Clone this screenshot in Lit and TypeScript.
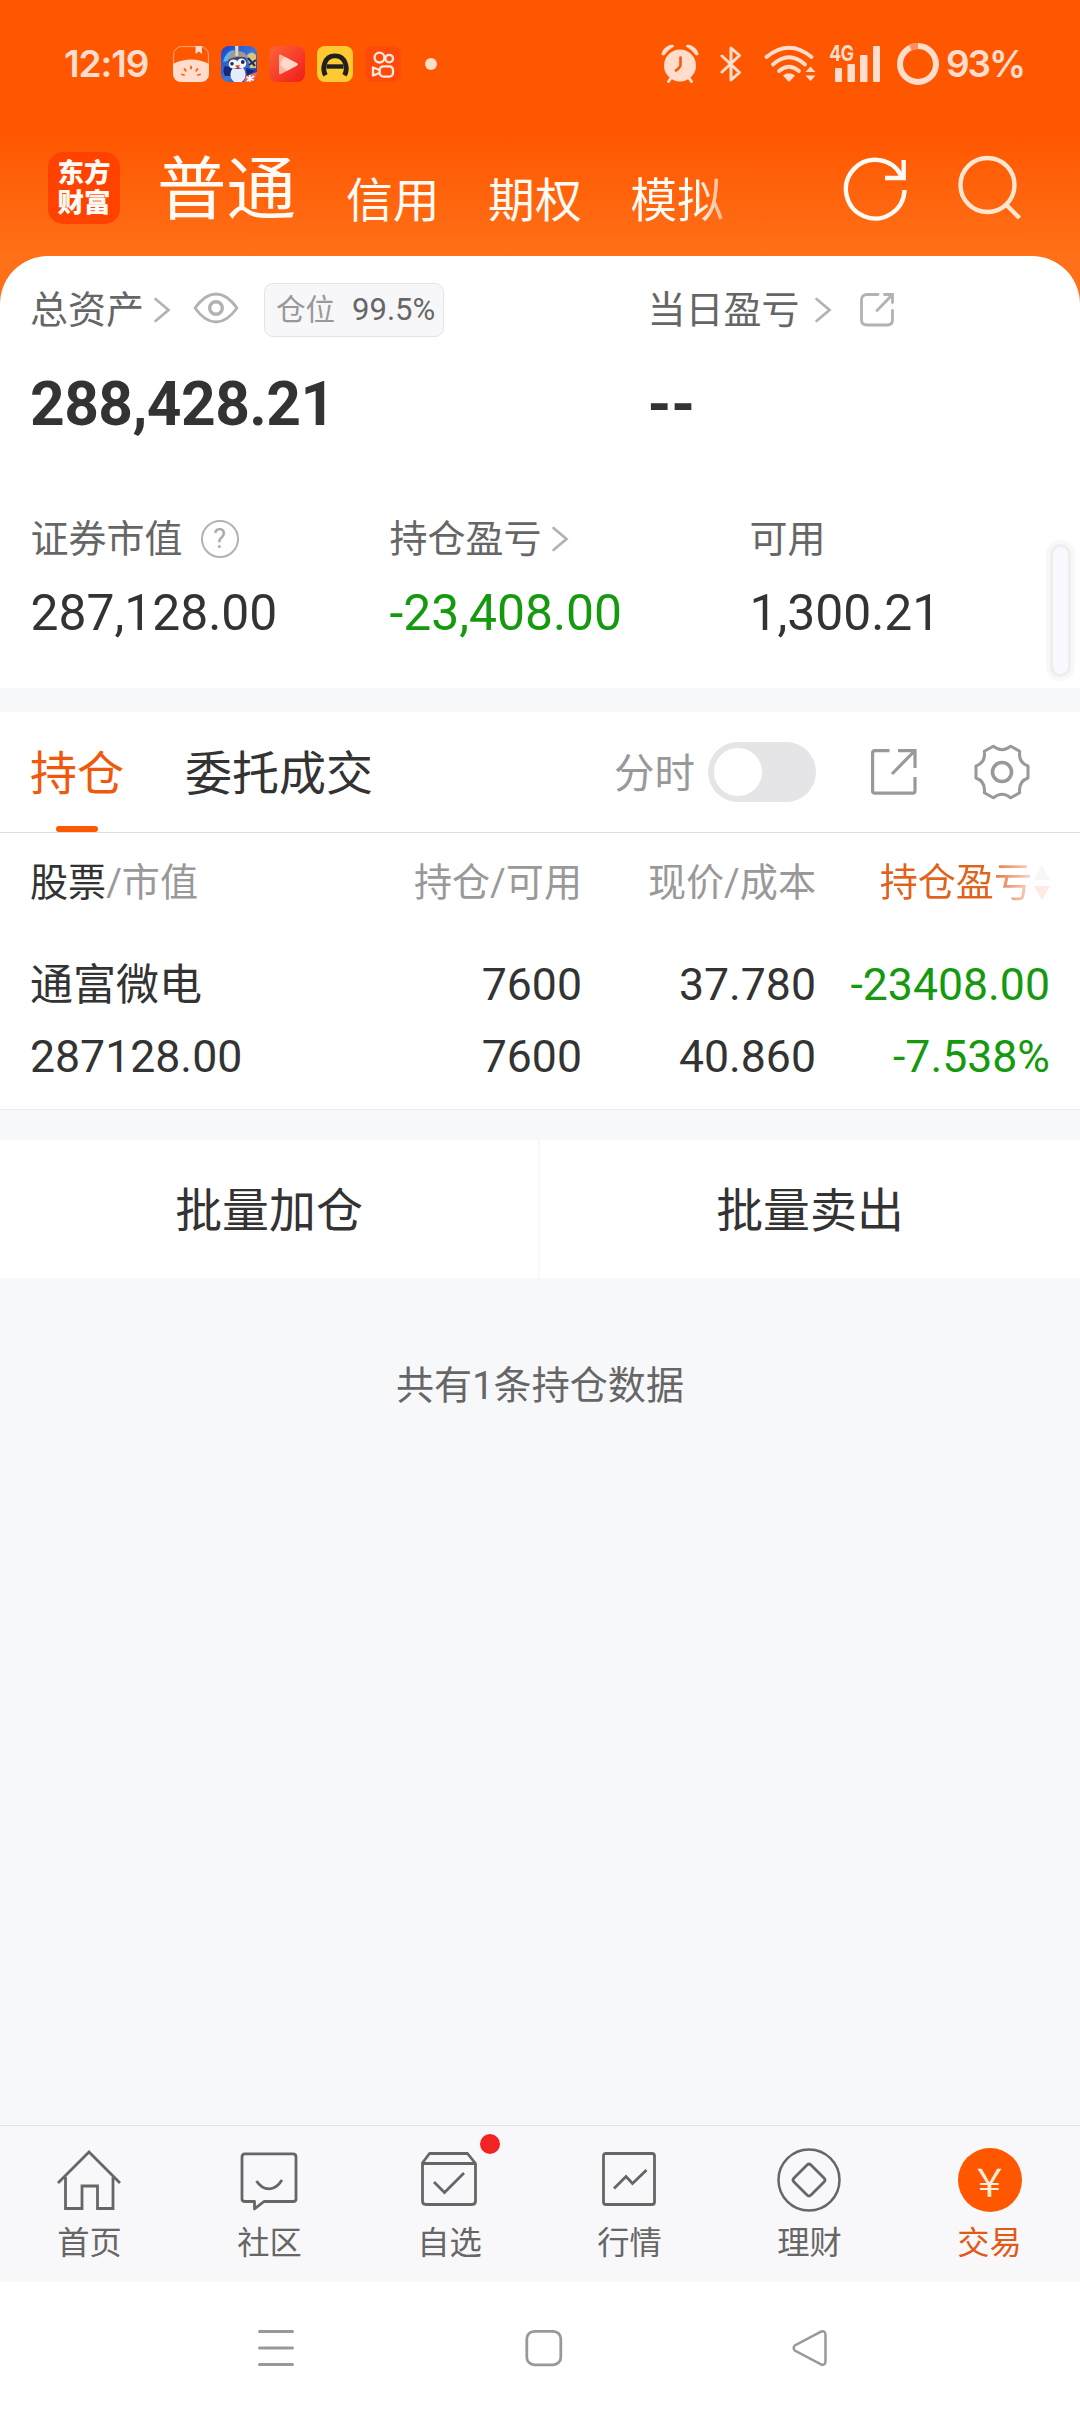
import { LitElement, html, css, svg } from "lit";
import { customElement, property } from "lit/decorators.js";

const chevron = html`<svg class="chev" width="18" height="28" viewBox="0 0 18 28" fill="none" stroke="#b2b2b2" stroke-width="2.7" stroke-linecap="round"><path d="M2.5 3 L15.5 14 L2.5 25" /></svg>`;

@customElement("status-bar")
export class StatusBar extends LitElement {
  static styles = css`
    :host { display: flex; height: 128px; align-items: center; padding: 0 56px 0 64px; box-sizing: border-box; font-family: "Inter", "Roboto", sans-serif; color: #ffdccb; }
    .time { width: 109px; font-size: 37px; line-height: 40px; font-weight: 600; letter-spacing: -1.1px; white-space: nowrap; }
    .apps { display: flex; gap: 12px; }
    .dot { width: 12px; height: 12px; border-radius: 50%; background: #ffdccb; margin-left: 24px; }
    .right { margin-left: auto; display: flex; align-items: center; }
    svg { display: block; }
    .signal { width: 52px; height: 40px; margin-left: 13px; position: relative; }
    .gen { position: absolute; left: 0; top: -1px; font-size: 22px; line-height: 20px; font-weight: 700; letter-spacing: -1px; transform: scaleX(.82); transform-origin: left; }
    .bars { position: absolute; left: 6px; top: 2px; }
    .bt { margin-left: 21px; }
    .wifi { margin-left: 22px; }
    .ring { margin-left: 16px; }
    .pct { margin-left: 7px; font-size: 37px; line-height: 44px; font-weight: 600; letter-spacing: -2.1px; width: 78px; white-space: nowrap; }
  `;
  render() {
    return html`
      <div class="time">12:19</div>
      <div class="apps">
        <svg width="36" height="36" viewBox="0 0 36 36">
          <rect x=".6" y=".6" width="34.8" height="34.8" rx="8" fill="none" stroke="#ffa87c" stroke-width="1" />
          <path d="M0 18 Q8 13.5 18 13.5 T36 18 V27 Q36 36 27 36 H9 Q0 36 0 27 Z" fill="#ffdccb" />
          <path d="M22.5 0 H29 V8 L25.8 5.5 L22.5 8 Z" fill="#ffdccb" />
          <g stroke="#ff5a06" stroke-width="1.8" stroke-linecap="round"><path d="M18 20.5 V22.5 M11.5 23 L12.8 24.8 M24.5 23 L23.2 24.8 M9 28.5 L11 29 M27 28.5 L25 29" /></g>
        </svg>
        <svg width="36" height="36" viewBox="0 0 36 36">
          <defs><clipPath id="pc"><rect width="36" height="36" rx="8" /></clipPath><linearGradient id="pg" x1="0" y1="0" x2="1" y2="1"><stop offset="0" stop-color="#1b45c5" /><stop offset=".55" stop-color="#3e78dc" /><stop offset="1" stop-color="#172a8e" /></linearGradient></defs>
          <g clip-path="url(#pc)">
            <rect width="36" height="36" fill="url(#pg)" />
            <path d="M2 16 Q5 4 14 4 L10 14 Z" fill="#55b8f1" />
            <path d="M26 9 Q31 4 35 9 V22 L29 22 Z" fill="#d8c67a" />
            <path d="M28 19 L35 14 M27 12 L34 20" stroke="#1f2c6a" stroke-width="2" />
            <path d="M4 20 Q1 24 4 30 L11 30 L12 22 Z M25 22 L34 25 L26 30 Z" fill="#142a78" />
            <ellipse cx="17" cy="28.5" rx="7.6" ry="8.5" fill="#e6ecfa" />
            <ellipse cx="16.500" cy="16" rx="9.500" ry="7" fill="#3a4678" />
            <ellipse cx="12.500" cy="18" rx="4.800" ry="4.600" fill="#f2f4fb" /><ellipse cx="20.500" cy="17.400" rx="4.800" ry="4.800" fill="#f2f4fb" />
            <circle cx="11" cy="17.800" r="1.800" fill="#222a4d" /><circle cx="21.800" cy="16" r="1.900" fill="#222a4d" />
            <path d="M6.500 14 Q8 5 15.500 5.500 Q24 4 26.500 12 Q16 8.500 6.500 14 Z" fill="#a59a8c" />
            <path d="M14 0 H17.5 L17 10 L14.500 10 Z" fill="#e5d9b5" />
            <path d="M14 19.5 L19 19 L16.8 22.6 Z" fill="#f0452c" />
            <path d="M25 30 L36 26 V36 H23 Z" fill="#f06a5a" /><path d="M29 29 V36 M25.5 31 L33 34.5 M33 30 L26 35" stroke="#fff" stroke-width="1.6" />
          </g>
        </svg>
        <svg width="36" height="36" viewBox="0 0 36 36">
          <defs><linearGradient id="vg" x1="0" y1="0" x2="1" y2="1"><stop offset="0" stop-color="#ff6436" /><stop offset="1" stop-color="#ee1c1c" /></linearGradient></defs>
          <rect width="36" height="36" rx="8" fill="url(#vg)" />
          <path d="M12 8.8 Q10 7.8 10 10 V27 Q10 29 12 28 L28 19.4 Q29.6 18.3 28 17.2 Z" fill="#ffb3a5" />
          <path d="M16 11 L28 17.2 Q29.6 18.3 28 19.4 L18 24.8 L10.4 18.5 Z" fill="#ffd6cc" />
        </svg>
        <svg width="36" height="36" viewBox="0 0 36 36">
          <rect width="36" height="36" rx="8" fill="#fdca34" />
          <path d="M8.600 29.300 C5 23.5 6.5 9.8 18 9.8 C29.5 9.8 31 23.5 27.400 29.300" fill="none" stroke="#20211f" stroke-width="4.800" />
          <path d="M9.5 20.5 H26.5" stroke="#20211f" stroke-width="4.4" />
        </svg>
        <svg width="36" height="36" viewBox="0 0 36 36" fill="none" stroke="#ffebe2" stroke-width="2.3">
          <rect width="36" height="36" rx="8" fill="#ff4a0a" stroke="none" />
          <circle cx="14.5" cy="11.6" r="4.9" /><circle cx="24.2" cy="12.6" r="3.8" />
          <rect x="14.7" y="20.3" width="13.3" height="10.3" rx="3.8" />
          <path d="M14.5 24 L8 21.5 V29.5 L14.5 27" stroke-linejoin="round" />
        </svg>
      </div>
      <div class="dot"></div>
      <div class="right">
        <svg width="38" height="40" viewBox="0 0 38 40">
          <path d="M.8 10.5 Q2.5 2.5 11 1 L13 2 Q6.5 5.5 3 11 Z M37.2 10.5 Q35.5 2.5 27 1 L25 2 Q31.5 5.5 35 11 Z" fill="#ffdccb" stroke="#ffdccb" stroke-linejoin="round" />
          <circle cx="19" cy="21.5" r="16" fill="#ffdccb" />
          <path d="M10 34 L7.5 37.5 M28 34 L30.5 37.5" stroke="#ffdccb" stroke-width="3" stroke-linecap="round" />
          <path d="M19.5 13.5 V21 Q19.5 23 15 26.5" fill="none" stroke="#ff5700" stroke-width="2.6" stroke-linecap="round" />
        </svg>
        <svg class="bt" width="22" height="38" viewBox="0 0 22 38" fill="none" stroke="#ffdccb" stroke-width="3" stroke-linejoin="round" stroke-linecap="round"><path d="M2 11 L19.5 27.5 L11 35 V3 L19.5 10.5 L2 27" /></svg>
        <svg class="wifi" width="52" height="38" viewBox="0 0 52 38">
          <g fill="none" stroke="#ffdccb" stroke-width="3.8" stroke-linecap="round"><path d="M2.5 12 Q25 -6.5 47.5 12" /><path d="M9 19.5 Q25 5 41 19.5" /><path d="M15 26 Q25 17.5 35 26" /></g>
          <path d="M19 30.5 Q25 26 31 30.5 L26 36 Q25 37 24 36 Z" fill="#ffdccb" />
          <path d="M41.5 27 L46.5 21.5 L51.5 27 Z M41.5 30.5 L46.5 36 L51.5 30.5 Z" fill="#ffdccb" />
        </svg>
        <div class="signal"><span class="gen">4G</span>
          <svg class="bars" width="46" height="36" fill="#ffdccb"><rect y="22" width="7" height="14" rx="1" /><rect x="12.5" y="18" width="7.5" height="18" rx="1" /><rect x="25" y="9" width="7.5" height="27" rx="1" /><rect x="38" width="7" height="36" rx="1" /></svg>
        </div>
        <svg class="ring" width="42" height="42" viewBox="0 0 42 42" fill="none"><circle cx="21" cy="21" r="18" stroke="#ffdccb" stroke-width="6" /><path d="M21 3 A18 18 0 0 0 13.3 4.7" stroke="#ff8f5c" stroke-width="6.5" /></svg>
        <div class="pct">93%</div>
      </div>`;
  }
}

@customElement("account-header")
export class AccountHeader extends LitElement {
  static styles = css`
    :host { display: flex; height: 128px; padding: 0 56px 0 48px; box-sizing: border-box; color: #fffaf3; }
    .logo { width: 72px; height: 72px; margin-top: 24px; border-radius: 15px; background: #ff4200; display: flex; align-items: center; justify-content: center; font-weight: 900; font-size: 26.5px; line-height: 30px; }
    .tabs { display: flex; margin-left: 37px; white-space: nowrap; width: 700px; }
    .main { font-size: 69.5px; line-height: 80px; margin-top: 23px; }
    .tab { font-size: 46.8px; line-height: 60px; margin-top: 43px; }
    .t1 { margin-left: 50px; } .t2 { margin-left: 48.5px; }
    .fade { background: linear-gradient(90deg, #fffaf3 72%, #ffb184 100%); -webkit-background-clip: text; color: transparent; }
    .icons { display: flex; margin-left: -14px; }
    svg { display: block; }
    .refresh { margin-top: 28px; }
    .search { margin: 26px 0 0 47.5px; }
  `;
  render() {
    return html`
      <div class="logo"><div>东方<br />财富</div></div>
      <div class="tabs">
        <div class="main">普通</div>
        <div class="tab t1">信用</div><div class="tab t2">期权</div><div class="tab t2 fade">模拟</div>
      </div>
      <div class="icons">
        <svg class="refresh" width="66" height="66" viewBox="0 0 66 66" fill="none" stroke="#fffaf3" stroke-width="4.4"><path d="M61.5 34 A29.3 29.3 0 1 1 58.5 20.2" /><path d="M60.7 4 V22 H42" /></svg>
        <svg class="search" width="66" height="68" viewBox="0 0 66 68" fill="none" stroke="#ffe6d0" stroke-width="4.4"><circle cx="30.5" cy="31" r="27" /><path d="M49.5 51 L62.5 64" /></svg>
      </div>`;
  }
}

@customElement("asset-card")
export class AssetCard extends LitElement {
  static styles = css`
    :host { display: block; height: 432px; box-sizing: border-box; border-radius: 48px 48px 0 0; background: #fff; color: #333; position: relative; padding-top: 26px; }
    .top { display: grid; grid-template-columns: 617.5px 1fr; padding-left: 30px; }
    .line { display: flex; align-items: center; height: 56px; line-height: 54px; font-size: 38px; color: #666; white-space: nowrap; }
    svg { display: block; }
    .chev { margin-left: 9px; }
    .eye { margin-left: 22px; margin-top: -4px; }
    .badge { margin-left: 25px; width: 180px; height: 54px; line-height: 50px; box-sizing: border-box; border: 1.5px solid #e4e4e8; border-radius: 9px; background: #f7f7fa; display: flex; align-items: center; padding-left: 11px; color: #999; font-size: 29.5px; }
    .badge b { font-weight: 400; color: #666; margin-left: 17px; font-size: 31px; }
    .far { margin-left: 14.5px; }
    .share { margin-left: 26.5px; }
    .big { font-weight: 700; font-size: 60.5px; line-height: 72px; margin-top: 31px; white-space: nowrap; letter-spacing: -.55px; }
    .dash { letter-spacing: -.2px; }
    .grid { display: grid; grid-template-columns: 359px 360px 1fr; padding-left: 30.5px; margin-top: 70px; }
    .help { width: 38px; height: 38px; line-height: 34px; box-sizing: border-box; border: 2.5px solid #b2b2b2; border-radius: 50%; margin-left: 18px; display: flex; align-items: center; justify-content: center; font-size: 27px; color: #aaa; }
    .val { font-size: 49.8px; line-height: 60px; margin-top: 16px; white-space: nowrap; }
    .green { color: #15990f; }
    .handle { position: absolute; left: 1053px; top: 291px; width: 15px; height: 127px; border-radius: 8px; background: #f8f8fe; box-shadow: 0 0 0 3px #eeeeef, 0 0 1px 7px #f8f8f8; }
  `;
  render() {
    return html`
      <div class="top">
        <div>
          <div class="line">总资产${chevron}
            <svg class="eye" width="46" height="32" viewBox="0 0 46 32" fill="none" stroke="#b2b2b2" stroke-width="2.8"><path d="M2 16 Q12 2 23 2 T44 16 Q34 30 23 30 T2 16 Z" stroke-linejoin="round" /><circle cx="23" cy="16" r="6.3" stroke-width="3.4" /></svg>
            <div class="badge">仓位<b>99.5%</b></div>
          </div>
          <div class="big">288,428.21</div>
        </div>
        <div>
          <div class="line">当日盈亏<span class="far"></span>
            <svg width="18" height="28" viewBox="0 0 18 28" fill="none" stroke="#b2b2b2" stroke-width="2.7" stroke-linecap="round"><path d="M2.5 3 L15.5 14 L2.5 25" /></svg>
            <svg class="share" width="36" height="36" viewBox="0 0 36 36" fill="none" stroke="#b2b2b2" stroke-width="2.8" stroke-linecap="round"><path d="M19 2.5 H8 Q2.5 2.5 2.5 8 V28 Q2.5 33 8 33 H28 Q33.5 33 33.5 28 V18.5" /><path d="M25.5 2.5 H33.5 V10.5 M33 3 L18 18.5" /></svg>
          </div>
          <div class="big dash">--</div>
        </div>
      </div>
      <div class="grid">
        <div><div class="line">证券市值<span class="help">?</span></div><div class="val">287,128.00</div></div>
        <div><div class="line">持仓盈亏${chevron}</div><div class="val green">-23,408.00</div></div>
        <div><div class="line">可用</div><div class="val">1,300.21</div></div>
      </div>
      <div class="handle"></div>`;
  }
}

@customElement("holdings-panel")
export class HoldingsPanel extends LitElement {
  static styles = css`
    :host { display: block; color: #333; background: #fff; }
    .tabs { display: flex; height: 121px; box-sizing: border-box; border-bottom: 1.5px solid #dedede; padding-left: 30px; font-size: 47px; line-height: 60px; white-space: nowrap; }
    .tab { padding-top: 32px; margin-right: 61px; position: relative; }
    .on { color: #f0590d; }
    .on::after { content: ""; position: absolute; left: 26px; top: 114px; width: 42px; height: 6px; border-radius: 3px; background: #ff5700; }
    .tools { display: flex; align-items: center; height: 120px; margin-left: 180px; font-size: 40.5px; color: #999; }
    .tools span { padding-top: 4px; }
    .switch { width: 108px; height: 60px; border-radius: 30px; background: #e5e5e7; margin-left: 13px; display: flex; align-items: center; padding-left: 6px; box-sizing: border-box; }
    .knob { width: 48px; height: 48px; border-radius: 50%; background: #fff; }
    svg { display: block; }
    .share { margin-left: 54px; } .gear { margin-left: 56px; }
    .row { display: grid; grid-template-columns: 280px 272px 234px 234px; padding-left: 30px; text-align: right; white-space: nowrap; align-content: start; }
    .row > :nth-child(4n + 1) { text-align: left; }
    .head { font-size: 38.1px; line-height: 60px; padding-top: 20px; height: 79px; box-sizing: border-box; color: #999; }
    .dark { color: #333; }
    .sort { display: flex; justify-content: flex-end; align-items: center; height: 60px; }
    .grad { background: linear-gradient(90deg, #e2611c 70%, #f9d9c9 100%); -webkit-background-clip: text; color: transparent; }
    .arrows { margin-left: 2px; }
    .body { font-size: 44.6px; line-height: 72px; height: 198px; box-sizing: border-box; padding-top: 37px; border-bottom: 1.5px solid #ececee; }
    .name { font-size: 43px; }
    .green { color: #15990f; }
  `;
  render() {
    return html`
      <div class="tabs">
        <div class="tab on">持仓</div><div class="tab">委托成交</div>
        <div class="tools"><span>分时</span><div class="switch"><div class="knob"></div></div>
          <svg class="share" width="48" height="48" viewBox="0 0 48 48" fill="none" stroke="#999" stroke-width="3.2"><path d="M19.5 2.6 H5 Q2.6 2.6 2.6 5 V43 Q2.6 45.2 5 45.2 H42.8 Q45 45.2 45 43 V29" /><path d="M28 2.6 H45 V20 M44.5 3 L22 26" /></svg>
          <svg class="gear" width="56" height="56" viewBox="0 0 56 56" fill="none" stroke="#999" stroke-width="3" stroke-linejoin="round"><path d="M19.3 2.2 Q28 9.4 36.7 2.2 L45.7 7.3 Q44.2 18.6 54 22 V34 Q44.2 37.4 45.7 48.7 L36.7 53.8 Q28 46.6 19.3 53.8 L10.3 48.7 Q11.8 37.4 2 34 V22 Q11.8 18.6 10.3 7.3 Z" /><circle cx="28" cy="28" r="9.5" stroke-width="3.6" /></svg>
        </div>
      </div>
      <div class="row head">
        <div><span class="dark">股票</span>/市值</div><div>持仓/可用</div><div>现价/成本</div>
        <div class="sort"><span class="grad">持仓盈亏</span><svg class="arrows" width="16" height="36"><path d="M0 15 L8 0 L16 15 Z" fill="#f7f7f8" /><path d="M0 21 H16 L8 35 Z" fill="#fdebe3" /></svg></div>
      </div>
      <div class="row body">
        <div class="name">通富微电</div><div>7600</div><div>37.780</div><div class="green">-23408.00</div>
        <div>287128.00</div><div>7600</div><div>40.860</div><div class="green">-7.538%</div>
      </div>`;
  }
}

interface NavItem { label: string; icon?: unknown; dot?: boolean }

@customElement("nav-bar")
export class NavBar extends LitElement {
  @property() active = "交易";
  static styles = css`
    :host { display: grid; grid-template-columns: repeat(6, 180px); height: 157px; box-sizing: border-box; border-top: 1.5px solid #e0e2e4; background: #f8f8fa; color: #666; font-size: 32.3px; }
    .item { display: flex; flex-direction: column; align-items: center; padding-top: 22px; position: relative; height: 134px; }
    .label { line-height: 40px; margin-top: 11px; white-space: nowrap; margin-left: -1px; }
    .on { color: #e05a18; }
    svg { display: block; margin-left: -2px; }
    .dot { position: absolute; left: 120px; top: 8px; width: 20px; height: 20px; border-radius: 50%; background: #f22323; }
    .coin { width: 64px; height: 64px; border-radius: 50%; background: #ff5700; display: flex; align-items: center; justify-content: center; color: #ffeeda; font-family: "Noto Sans CJK SC", sans-serif; font-size: 38px; line-height: 62px; margin-left: -1px; }
  `;
  private items: NavItem[] = [
    { label: "首页", icon: svg`<path d="M1 35 L32 4 L63 35 M8.5 29 V60.5 H25 V38 H40.5 V60.5 H56 V29" />` },
    { label: "社区", icon: svg`<path d="M7 5.8 H56 Q59 5.8 59 9 V51 Q59 53.5 56 53.5 H27 L17.5 61 V53.5 H8 Q5 53.5 5 51 V9 Q5 5.8 8 5.8 Z" stroke-linejoin="round" /><path d="M19.5 33 Q24.5 40.8 32 40.8 T45 32" />` },
    { label: "自选", icon: svg`<path d="M5 15.5 L12.5 5.5 H50.5 L58.5 15.5 V53 Q58.5 56.5 55 56.5 H9 Q5.5 56.5 5.5 53 V15.5 H58.5" stroke-linejoin="round" /><path d="M17 34 L27.5 44.5 L47 25" />`, dot: true },
    { label: "行情", icon: svg`<rect x="6.5" y="5.5" width="51" height="51" rx="2.5" /><path d="M17 40.5 L29 28.5 L35.5 35.5 L49.5 22" />` },
    { label: "理财", icon: svg`<circle cx="32" cy="32" r="30.5" stroke-width="2.5" /><path d="M30 17 Q32 15 34 17 L47 30 Q49 32 47 34 L34 47 Q32 49 30 47 L17 34 Q15 32 17 30 Z" />` },
    { label: "交易" },
  ];
  render() {
    return this.items.map((i) => html`
      <div class="item ${i.label === this.active ? "on" : ""}">
        ${i.icon
          ? html`<svg width="64" height="64" viewBox="0 0 64 64" fill="none" stroke="#666" stroke-width="2.8">${i.icon}</svg>`
          : html`<div class="coin">&#xFFE5;</div>`}
        ${i.dot ? html`<span class="dot"></span>` : ""}
        <div class="label">${i.label}</div>
      </div>`);
  }
}

@customElement("app-root")
export class AppRoot extends LitElement {
  static styles = css`
    :host { display: flex; flex-direction: column; width: 1080px; height: 2414px; overflow: hidden; background: #f7f8fa; font-family: "Roboto", "Noto Sans CJK SC", sans-serif; }
    .hero { background: linear-gradient(180deg, #ff5700 0, #ff5700 132px, #ff7018 256px, #ff7018 304px, transparent 304px); }
    .gap { margin-top: 24px; }
    .batch { display: grid; grid-template-columns: 538px 1fr; grid-template-rows: 138px; gap: 2px; height: 138px; margin-top: 30px; font-size: 46.9px; color: #333; text-align: center; line-height: 141px; }
    .batch div { background: #fff; }
    .count { flex: 1; text-align: center; padding-top: 83px; font-size: 38.1px; line-height: 50px; color: #666; }
    .sys { height: 132px; background: #fff; display: flex; align-items: flex-start; padding: 46px 0 0 257px; box-sizing: border-box; }
    .sys svg { display: block; }
    .s2 { margin-left: 229px; } .s3 { margin-left: 228px; }
  `;
  render() {
    return html`
      <div class="hero"><status-bar></status-bar><account-header></account-header><asset-card></asset-card></div>
      <holdings-panel class="gap"></holdings-panel>
      <div class="batch"><div>批量加仓</div><div>批量卖出</div></div>
      <div class="count">共有1条持仓数据</div>
      <nav-bar></nav-bar>
      <div class="sys">
        <svg width="38" height="40" stroke="#999" stroke-width="3" stroke-linecap="round"><path d="M2.5 3.5 H35.5 M2.5 20 H35.5 M2.5 36.5 H35.5" /></svg>
        <svg class="s2" width="40" height="40" fill="none" stroke="#999" stroke-width="2.8"><rect x="2.8" y="3.3" width="34" height="33.5" rx="7.5" /></svg>
        <svg class="s3" width="36" height="40" fill="none" stroke="#999" stroke-width="2.5"><path d="M28.5 3.8 L2.8 17.5 Q.6 20 2.8 22.5 L28.5 36.2 Q33.5 38 33.5 33 V7 Q33.5 2 28.5 3.8 Z" /></svg>
      </div>`;
  }
}
